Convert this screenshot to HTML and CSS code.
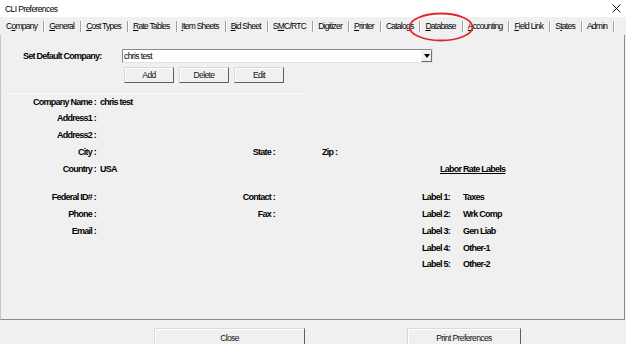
FILE: index.html
```html
<!DOCTYPE html>
<html lang="en">
<head>
  <meta charset="UTF-8">
  <title>CLI Preferences</title>
  <link rel="stylesheet" href="styles.css">
</head>
<body>
  <div class="window">

    <!-- title bar -->
    <div class="titlebar">
      <span>CLI Preferences</span>
      <svg class="close-x" width="9" height="9" viewBox="0 0 9 9">
        <path d="M0.5 0.5 L8.5 8.5 M8.5 0.5 L0.5 8.5" stroke="#111" stroke-width="1"/>
      </svg>
    </div>

    <!-- tab strip -->
    <div class="tabs">
      <span class="tab active">C<u>o</u>mpany</span>
      <span class="tab"><u>G</u>eneral</span>
      <span class="tab"><u>C</u>ost Types</span>
      <span class="tab"><u>R</u>ate Tables</span>
      <span class="tab"><u>I</u>tem Sheets</span>
      <span class="tab"><u>B</u>id Sheet</span>
      <span class="tab">S<u>M</u>C/RTC</span>
      <span class="tab">Digitizer</span>
      <span class="tab"><u>P</u>rinter</span>
      <span class="tab">Catalo<u>g</u>s</span>
      <span class="tab"><u>D</u>atabase</span>
      <span class="tab"><u>A</u>ccounting</span>
      <span class="tab"><u>F</u>ield Link</span>
      <span class="tab">S<u>t</u>ates</span>
      <span class="tab">Admin</span>
    </div>

    <!-- company page -->
    <div class="panel">
      <div class="default-row">
        <label class="b default-label">Set Default Company:</label>
        <div class="combo">
          <span class="combo-text">chris test</span>
          <span class="combo-btn"><i class="arrow"></i></span>
        </div>
      </div>

      <div class="btn-row">
        <button class="btn">Add</button>
        <button class="btn">Delete</button>
        <button class="btn">Edit</button>
      </div>

      <div class="sep"></div>

      <div class="info">
        <div class="lbl r1">Company Name :</div><div class="val r1">chris test</div>
        <div class="lbl r2">Address1 :</div>
        <div class="lbl r3">Address2 :</div>
        <div class="lbl r4">City :</div>
        <div class="lbl2 r4">State :</div>
        <div class="zip r4">Zip :</div>
        <div class="lbl r5">Country :</div><div class="val r5">USA</div>
        <div class="rate-head r5">Labor Rate Labels</div>

        <div class="lbl r7">Federal ID# :</div>
        <div class="lbl2 r7">Contact :</div>
        <div class="rl r7">Label 1:</div><div class="rv r7">Taxes</div>
        <div class="lbl r8">Phone :</div>
        <div class="lbl2 r8">Fax :</div>
        <div class="rl r8">Label 2:</div><div class="rv r8">Wrk Comp</div>
        <div class="lbl r9">Email :</div>
        <div class="rl r9">Label 3:</div><div class="rv r9">Gen Liab</div>
        <div class="rl r10">Label 4:</div><div class="rv r10">Other-1</div>
        <div class="rl r11">Label 5:</div><div class="rv r11">Other-2</div>
      </div>
    </div>

    <!-- bottom buttons -->
    <div class="footer">
      <button class="btn big close-btn">Close</button>
      <button class="btn big print-btn">Print Preferences</button>
    </div>

    <!-- red marker drawn over the Database tab -->
    <svg class="marker" width="70" height="34" viewBox="0 0 70 34">
      <ellipse cx="34" cy="17" rx="31.5" ry="13.5" fill="none" stroke="#e3262b" stroke-width="1.8"/>
    </svg>
  </div>
</body>
</html>
```

FILE: styles.css
```css
body {
  margin: 0;
  background: #f0f0f0;
  font-family: 'Liberation Sans', Arial, sans-serif;
  font-size: 8.5px;
  letter-spacing: -0.6px;
  color: #000;
}
.window {
  position: relative;
  width: 626px;
  height: 344px;
  overflow: hidden;
}
.titlebar {
  height: 17px;
  display: flex;
  align-items: center;
  justify-content: space-between;
  padding: 0 4px 0 5px;
  background: #fff;
}
.close-x {
  margin-right: 1px;
}
.tabs {
  height: 18px;
  display: flex;
  align-items: center;
  padding-left: 1px;
  white-space: nowrap;
}
.tab {
  flex-shrink: 0;
  line-height: 11px;
  letter-spacing: -0.75px;
  padding: 0 6px 0 5px;
  border-right: 1px solid #a0a0a0;
  box-shadow: 1px 0 0 #fff;
}
.tab u {
  text-underline-offset: 1px;
}
.panel {
  box-sizing: border-box;
  height: 285px;
  padding-top: 14px;
  border-left: 1px solid #c8c8c8;
  border-right: 1px solid #8c8c8c;
  border-bottom: 1px solid #8c8c8c;
  margin-right: 1px;
}
.b {
  font-weight: bold;
  font-size: 9px;
  letter-spacing: -0.75px;
}
.default-row {
  display: flex;
  align-items: center;
  height: 14px;
}
.default-label {
  width: 99px;
  padding-left: 22px;
  white-space: nowrap;
}
.combo {
  box-sizing: border-box;
  width: 311px;
  height: 14px;
  display: flex;
  align-items: center;
  background: #fff;
  border: 1px solid;
  border-color: #8a8a8a #e3e3e3 #e3e3e3 #8a8a8a;
}
.combo-text {
  flex: 1;
  padding-left: 1px;
}
.combo-btn {
  box-sizing: border-box;
  width: 11px;
  height: 12px;
  display: flex;
  align-items: center;
  justify-content: center;
  background: #f0f0f0;
  border: 1px solid;
  border-color: #f4f4f4 #6e6e6e #6e6e6e #f4f4f4;
}
.arrow {
  width: 0;
  height: 0;
  border-left: 3px solid transparent;
  border-right: 3px solid transparent;
  border-top: 4px solid #000;
}
.btn-row {
  display: flex;
  gap: 5px;
  margin-top: 4px;
  padding-left: 123px;
}
.btn {
  box-sizing: border-box;
  width: 50px;
  height: 16px;
  padding: 0;
  font: inherit;
  letter-spacing: inherit;
  color: #111;
  background: #f0f0f0;
  border: 1px solid;
  border-color: #dadada #5f5f5f #5f5f5f #dadada;
  box-shadow: inset 1px 1px 0 #fdfdfd;
}
.sep {
  height: 1px;
  width: 298px;
  margin: 10px 0 0 6px;
  background: #fbfbfb;
}
.info {
  display: grid;
  grid-template-columns: 95px 104px 75px 145px 40px 1fr;
  grid-template-rows: 15px 17px 17px 17px 17px 11px 17px 17px 17px 17px 16px;
  align-items: center;
  font-weight: bold;
  font-size: 9px;
  letter-spacing: -0.75px;
  white-space: nowrap;
}
.lbl { grid-column: 1; text-align: right; }
.val { grid-column: 2; padding-left: 4px; }
.lbl2 { grid-column: 3; text-align: right; }
.zip { grid-column: 4; padding-left: 47px; }
.rate-head {
  grid-column: 5 / 7;
  padding-left: 20px;
  text-decoration: underline;
}
.rl { grid-column: 5; padding-left: 2px; }
.rv { grid-column: 6; padding-left: 3px; }
.r1 { grid-row: 1; }
.r2 { grid-row: 2; }
.r3 { grid-row: 3; }
.r4 { grid-row: 4; }
.r5 { grid-row: 5; }
.r7 { grid-row: 7; }
.r8 { grid-row: 8; }
.r9 { grid-row: 9; }
.r10 { grid-row: 10; }
.r11 { grid-row: 11; }
.footer {
  display: flex;
  gap: 102px;
  padding: 8px 0 0 154px;
}
.big {
  height: 20px;
  padding-bottom: 2px;
  border-bottom: none;
}
.close-btn {
  width: 151px;
}
.print-btn {
  width: 114px;
}
.marker {
  position: absolute;
  left: 407px;
  top: 10px;
}
```
